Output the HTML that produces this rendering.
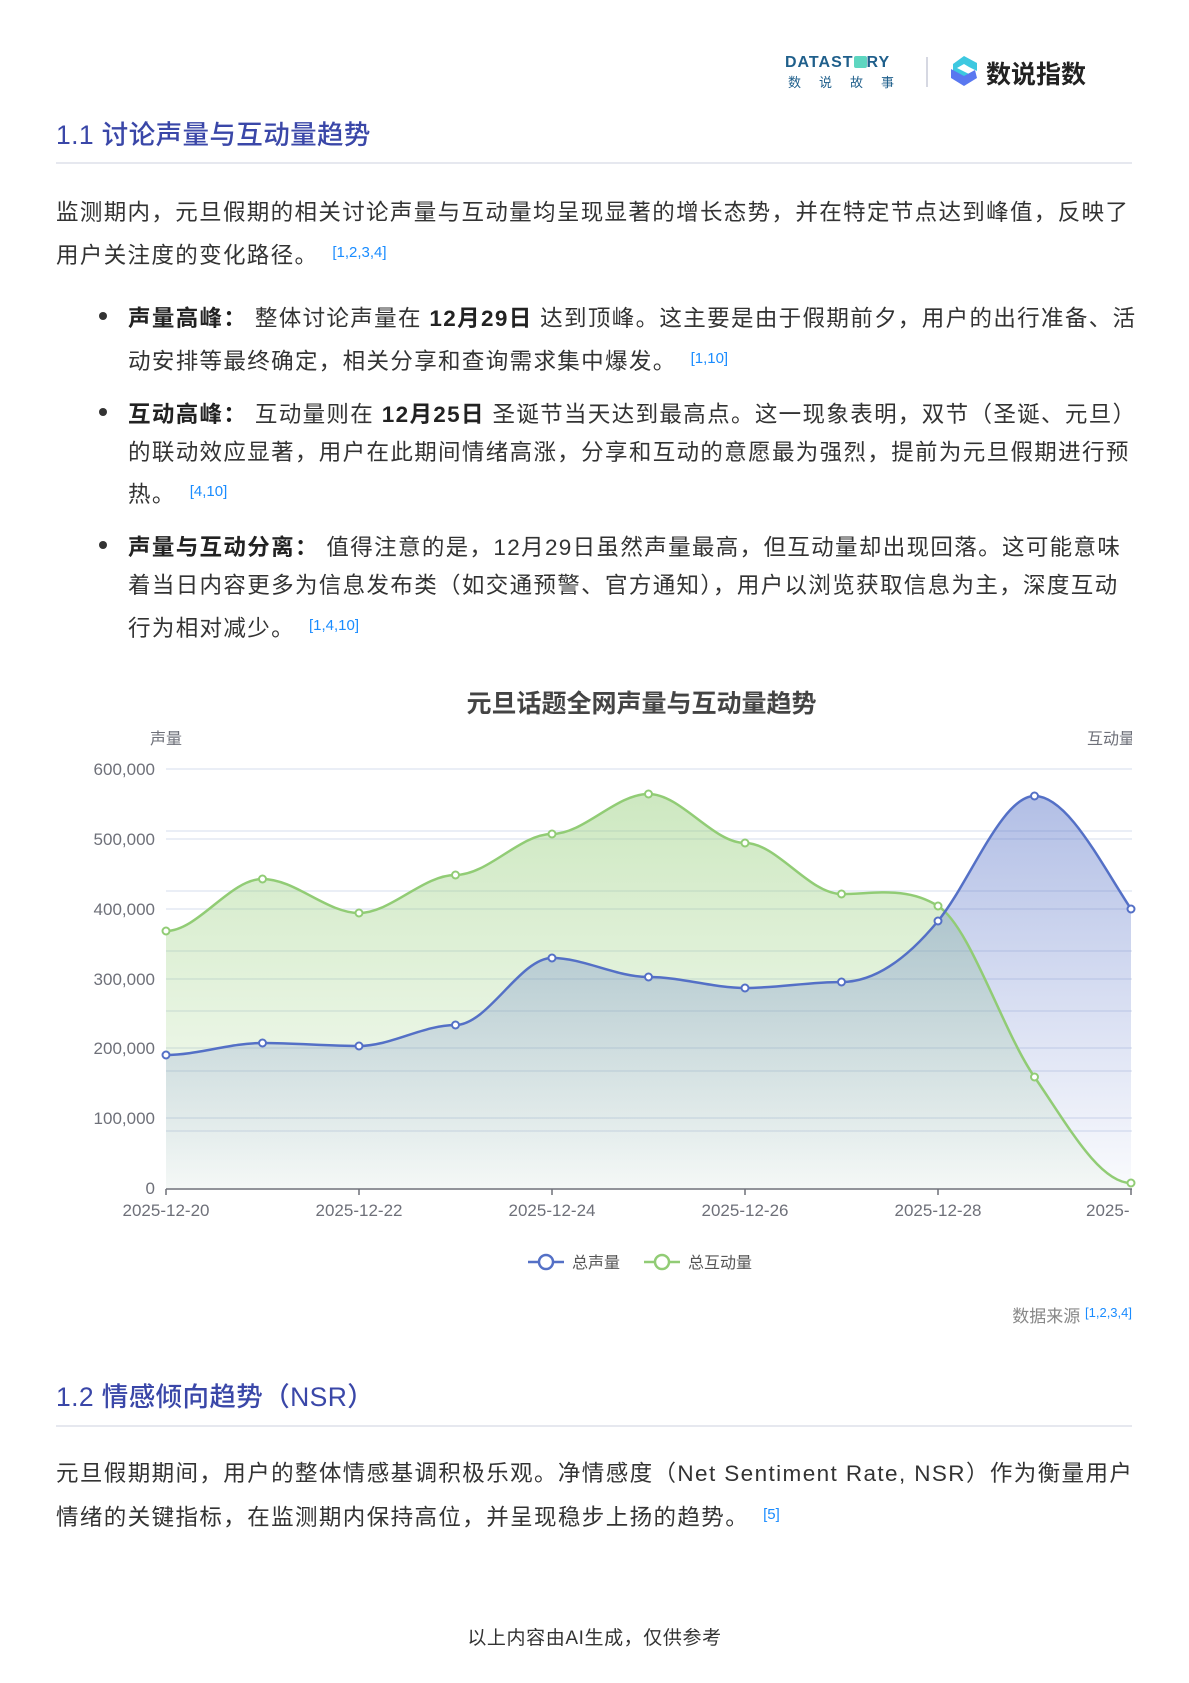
<!DOCTYPE html>
<html><head><meta charset="utf-8"><style>
*{margin:0;padding:0;box-sizing:border-box}
body{width:1189px;height:1683px;background:#fff;font-family:"Liberation Sans","Noto Sans CJK SC",sans-serif;color:#333;position:relative;overflow:hidden}
.a{position:absolute;white-space:nowrap}
h2{position:absolute;left:56px;font-size:26.5px;font-weight:500;color:#3a47a8;letter-spacing:0.4px;font-family:"Liberation Sans","Noto Sans CJK SC",sans-serif}
.rule{position:absolute;left:56px;width:1076px;height:2px;background:#e6e8ef}
.p{font-size:22.5px;color:#333;letter-spacing:1.35px}
.c{color:#1a8cff;font-size:15px;vertical-align:6px;margin-left:14px;letter-spacing:0}
b{font-weight:700;color:#222}
.dot{position:absolute;left:99px;width:8px;height:8px;border-radius:50%;background:#333}
</style></head><body>
<div class="a" style="left:785px;top:54px;font-size:16px;font-weight:700;color:#1f5f8b;letter-spacing:1px">DATAST<span style="display:inline-block;width:13px;height:12px;background:#5ed6c0;border-radius:2px;vertical-align:-1px"></span>RY</div>
<div class="a" style="left:788px;top:72px;font-size:13px;color:#1f5f8b;letter-spacing:18px">数说故事</div>
<div class="a" style="left:926px;top:57px;width:2px;height:30px;background:#d6d8e2"></div>
<svg class="a" style="left:949px;top:55px" width="30" height="32" viewBox="0 0 30 32"><path d="M15 1 L28 8 L28 16 L20 12 L15 9 L8 13 L22 20 L15 24 L4 18 L4 9 Z" fill="#3dc8e0"/><path d="M2 14 L15 21 L26 15 L28 23 L15 31 L2 23 Z" fill="#5a78f0"/></svg>
<div class="a" style="left:986px;top:55px;font-size:25px;font-weight:700;color:#222">数说指数</div>

<h2 style="top:113px">1.1 讨论声量与互动量趋势</h2>
<div class="rule" style="top:162px"></div>
<div class="a p" style="left:56px;top:195px">监测期内，元旦假期的相关讨论声量与互动量均呈现显著的增长态势，并在特定节点达到峰值，反映了</div>
<div class="a p" style="left:56px;top:238px">用户关注度的变化路径。<span class="c">[1,2,3,4]</span></div>

<div class="dot" style="top:312px"></div>
<div class="a p" style="left:128px;top:301px"><b>声量高峰：</b> 整体讨论声量在 <b>12月29日</b> 达到顶峰。这主要是由于假期前夕，用户的出行准备、活</div>
<div class="a p" style="left:128px;top:344px">动安排等最终确定，相关分享和查询需求集中爆发。<span class="c">[1,10]</span></div>
<div class="dot" style="top:408px"></div>
<div class="a p" style="left:128px;top:397px"><b>互动高峰：</b> 互动量则在 <b>12月25日</b> 圣诞节当天达到最高点。这一现象表明，双节（圣诞、元旦）</div>
<div class="a p" style="left:128px;top:435px">的联动效应显著，用户在此期间情绪高涨，分享和互动的意愿最为强烈，提前为元旦假期进行预</div>
<div class="a p" style="left:128px;top:477px">热。<span class="c">[4,10]</span></div>
<div class="dot" style="top:541px"></div>
<div class="a p" style="left:128px;top:530px"><b>声量与互动分离：</b> 值得注意的是，12月29日虽然声量最高，但互动量却出现回落。这可能意味</div>
<div class="a p" style="left:128px;top:568px">着当日内容更多为信息发布类（如交通预警、官方通知），用户以浏览获取信息为主，深度互动</div>
<div class="a p" style="left:128px;top:611px">行为相对减少。<span class="c">[1,4,10]</span></div>

<div class="a" style="left:0;width:1283px;text-align:center;top:684px;font-size:25px;font-weight:700;color:#444">元旦话题全网声量与互动量趋势</div>
<svg class="a" style="left:0;top:720px" width="1189" height="560" viewBox="0 720 1189 560">
<defs>
<linearGradient id="g" x1="0" y1="0" x2="0" y2="1"><stop offset="0" stop-color="#91cc75" stop-opacity=".45"/><stop offset="1" stop-color="#91cc75" stop-opacity=".05"/></linearGradient>
<linearGradient id="b" x1="0" y1="0" x2="0" y2="1"><stop offset="0" stop-color="#5470c6" stop-opacity=".45"/><stop offset="1" stop-color="#5470c6" stop-opacity=".03"/></linearGradient>
</defs>
<g stroke="#e3e8f3" stroke-width="1.5">
<line x1="166" x2="1132" y1="769" y2="769"/><line x1="166" x2="1132" y1="839" y2="839"/><line x1="166" x2="1132" y1="909" y2="909"/><line x1="166" x2="1132" y1="979" y2="979"/><line x1="166" x2="1132" y1="1048" y2="1048"/><line x1="166" x2="1132" y1="1118" y2="1118"/>
<line x1="166" x2="1132" y1="831" y2="831"/><line x1="166" x2="1132" y1="891" y2="891"/><line x1="166" x2="1132" y1="951" y2="951"/><line x1="166" x2="1132" y1="1011" y2="1011"/><line x1="166" x2="1132" y1="1071" y2="1071"/><line x1="166" x2="1132" y1="1131" y2="1131"/>
</g>
<path d="M166,931 C198,931 230,879 262.5,879 C295,879 327,913 359,913 C391,913 423,875 455.5,875 C488,875 520,834 552,834 C584,834 616,794 648.5,794 C681,794 713,843 745,843 C777,843 809,894 841.5,894 C874,894 906,886 938,906 C970,926 1002,1030 1034.5,1077 C1067,1124 1099,1183 1131,1183 L1131,1188 L166,1188Z" fill="url(#g)"/>
<path d="M166,1055 C198,1055 230,1043 262.5,1043 C295,1043 327,1046 359,1046 C391,1046 423,1025 455.5,1025 C488,1025 520,958 552,958 C584,958 616,977 648.5,977 C681,977 713,988 745,988 C777,988 809,982 841.5,982 C874,982 906,960 938,921 C970,882 1002,796 1034.5,796 C1067,796 1099,860 1131,909 L1131,1188 L166,1188Z" fill="url(#b)"/>
<path d="M166,931 C198,931 230,879 262.5,879 C295,879 327,913 359,913 C391,913 423,875 455.5,875 C488,875 520,834 552,834 C584,834 616,794 648.5,794 C681,794 713,843 745,843 C777,843 809,894 841.5,894 C874,894 906,886 938,906 C970,926 1002,1030 1034.5,1077 C1067,1124 1099,1183 1131,1183" fill="none" stroke="#91cc75" stroke-width="2.5"/>
<path d="M166,1055 C198,1055 230,1043 262.5,1043 C295,1043 327,1046 359,1046 C391,1046 423,1025 455.5,1025 C488,1025 520,958 552,958 C584,958 616,977 648.5,977 C681,977 713,988 745,988 C777,988 809,982 841.5,982 C874,982 906,960 938,921 C970,882 1002,796 1034.5,796 C1067,796 1099,860 1131,909" fill="none" stroke="#5470c6" stroke-width="2.5"/>
<g fill="#fff" stroke="#91cc75" stroke-width="2"><circle cx="166" cy="931" r="3.5"/><circle cx="262.5" cy="879" r="3.5"/><circle cx="359" cy="913" r="3.5"/><circle cx="455.5" cy="875" r="3.5"/><circle cx="552" cy="834" r="3.5"/><circle cx="648.5" cy="794" r="3.5"/><circle cx="745" cy="843" r="3.5"/><circle cx="841.5" cy="894" r="3.5"/><circle cx="938" cy="906" r="3.5"/><circle cx="1034.5" cy="1077" r="3.5"/><circle cx="1131" cy="1183" r="3.5"/></g>
<g fill="#fff" stroke="#5470c6" stroke-width="2"><circle cx="166" cy="1055" r="3.5"/><circle cx="262.5" cy="1043" r="3.5"/><circle cx="359" cy="1046" r="3.5"/><circle cx="455.5" cy="1025" r="3.5"/><circle cx="552" cy="958" r="3.5"/><circle cx="648.5" cy="977" r="3.5"/><circle cx="745" cy="988" r="3.5"/><circle cx="841.5" cy="982" r="3.5"/><circle cx="938" cy="921" r="3.5"/><circle cx="1034.5" cy="796" r="3.5"/><circle cx="1131" cy="909" r="3.5"/></g>
<line x1="166" x2="1132" y1="1189" y2="1189" stroke="#6e7079" stroke-width="1.5"/>
<g stroke="#6e7079" stroke-width="1.5"><line x1="166" x2="166" y1="1189" y2="1195"/><line x1="359" x2="359" y1="1189" y2="1195"/><line x1="552" x2="552" y1="1189" y2="1195"/><line x1="745" x2="745" y1="1189" y2="1195"/><line x1="938" x2="938" y1="1189" y2="1195"/><line x1="1131" x2="1131" y1="1189" y2="1195"/></g>
<g font-family="Liberation Sans,sans-serif" font-size="17" fill="#6e7079" text-anchor="end"><text x="155" y="775">600,000</text><text x="155" y="845">500,000</text><text x="155" y="915">400,000</text><text x="155" y="985">300,000</text><text x="155" y="1054">200,000</text><text x="155" y="1124">100,000</text><text x="155" y="1194">0</text></g>
<g font-family="Liberation Sans,sans-serif" font-size="17" fill="#6e7079" text-anchor="middle"><text x="166" y="1216">2025-12-20</text><text x="359" y="1216">2025-12-22</text><text x="552" y="1216">2025-12-24</text><text x="745" y="1216">2025-12-26</text><text x="938" y="1216">2025-12-28</text><text x="1131" y="1216" text-anchor="start" dx="-45">2025-</text></g>
<rect x="1132" y="1196" width="60" height="30" fill="#fff"/>
<g font-family="Liberation Sans,Noto Sans CJK SC,sans-serif" font-size="16" fill="#6e7079"><text x="150" y="744">声量</text></g>
<svg x="1080" y="725" width="52" height="30"><text x="7" y="19" font-family="Liberation Sans,Noto Sans CJK SC,sans-serif" font-size="16" fill="#6e7079">互动量</text></svg>
<g><line x1="528" x2="564" y1="1262" y2="1262" stroke="#5470c6" stroke-width="2.5"/><circle cx="546" cy="1262" r="7" fill="#fff" stroke="#5470c6" stroke-width="2.5"/>
<text x="572" y="1268" font-family="Liberation Sans,Noto Sans CJK SC,sans-serif" font-size="16" fill="#555">总声量</text>
<line x1="644" x2="680" y1="1262" y2="1262" stroke="#91cc75" stroke-width="2.5"/><circle cx="662" cy="1262" r="7" fill="#fff" stroke="#91cc75" stroke-width="2.5"/>
<text x="688" y="1268" font-family="Liberation Sans,Noto Sans CJK SC,sans-serif" font-size="16" fill="#555">总互动量</text></g>
</svg>
<div class="a" style="right:57px;top:1302px;font-size:17px;color:#888">数据来源 <span style="color:#1a8cff;font-size:13px;vertical-align:5px">[1,2,3,4]</span></div>

<h2 style="top:1375px">1.2 情感倾向趋势（NSR）</h2>
<div class="rule" style="top:1425px"></div>
<div class="a p" style="left:56px;top:1456px;letter-spacing:1.4px">元旦假期期间，用户的整体情感基调积极乐观。净情感度（Net Sentiment Rate, NSR）作为衡量用户</div>
<div class="a p" style="left:56px;top:1500px;letter-spacing:1.4px">情绪的关键指标，在监测期内保持高位，并呈现稳步上扬的趋势。<span class="c">[5]</span></div>

<div class="a" style="left:0;width:1189px;text-align:center;top:1623px;font-size:19px;letter-spacing:0.6px;color:#333">以上内容由AI生成，仅供参考</div>
</body></html>
